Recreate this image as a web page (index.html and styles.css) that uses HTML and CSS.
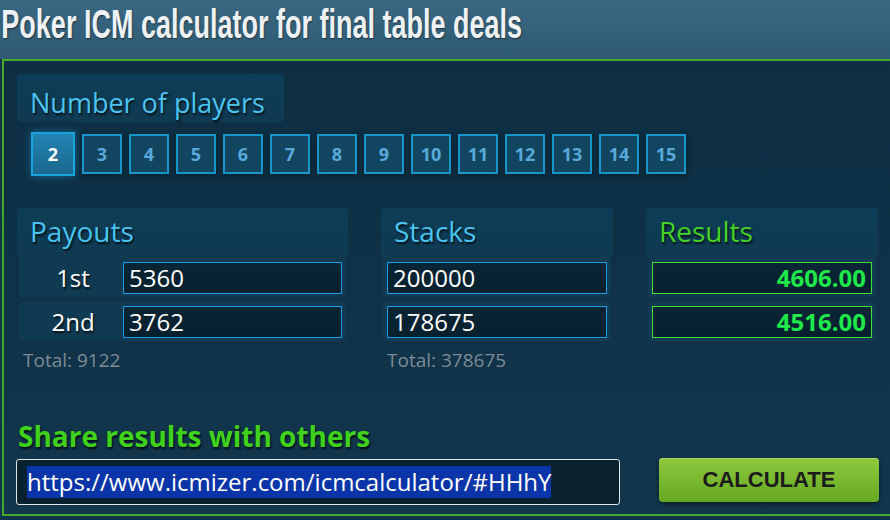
FILE: index.html
```html
<!DOCTYPE html>
<html lang="en">
  <head>
    <meta charset="UTF-8" />
    <meta name="viewport" content="width=device-width, initial-scale=1.0" />
    <link rel="stylesheet" href="styles.css">
    <title>ICM calculator</title>
  </head>
  <body>
    <header class="top">
      <h1>Poker ICM calculator for final table deals</h1>
    </header>

    <main class="panel">
      <section class="players">
        <div class="box-title"><h2>Number of players</h2></div>
        <div class="player-buttons">
          <button class="num active">2</button>
          <button class="num">3</button>
          <button class="num">4</button>
          <button class="num">5</button>
          <button class="num">6</button>
          <button class="num">7</button>
          <button class="num">8</button>
          <button class="num">9</button>
          <button class="num">10</button>
          <button class="num">11</button>
          <button class="num">12</button>
          <button class="num">13</button>
          <button class="num">14</button>
          <button class="num">15</button>
        </div>
      </section>

      <section class="columns">
        <div class="col payouts">
          <div class="box-title"><h2>Payouts</h2></div>
          <div class="row"><span class="place">1st</span><input type="text" value="5360" /></div>
          <div class="row"><span class="place">2nd</span><input type="text" value="3762" /></div>
          <p class="total">Total: 9122</p>
        </div>
        <div class="col stacks">
          <div class="box-title"><h2>Stacks</h2></div>
          <div class="row"><input type="text" value="200000" /></div>
          <div class="row"><input type="text" value="178675" /></div>
          <p class="total">Total: 378675</p>
        </div>
        <div class="col results">
          <div class="box-title"><h2>Results</h2></div>
          <div class="row"><div class="result">4606.00</div></div>
          <div class="row"><div class="result">4516.00</div></div>
        </div>
      </section>

      <section class="share">
        <h3>Share results with others</h3>
        <div class="share-row">
          <div class="share-link"><span class="selected">https://www.icmizer.com/icmcalculator/#HHhY</span></div>
          <button class="calc">CALCULATE</button>
        </div>
      </section>
    </main>
  </body>
</html>
```

FILE: styles.css
```css
body {
  margin: 0;
  background: #12344a;
  font-family: "Open Sans", "Noto Sans", sans-serif;
  overflow: hidden;
}

.top {
  height: 59px;
  background: linear-gradient(#3a6883, #2f5a72);
}
.top h1 {
  margin: 0;
  padding: 1px 0 0 2px;
  font-family: "Liberation Sans", sans-serif;
  font-weight: bold;
  font-size: 40px;
  line-height: 46px;
  color: #eef2f5;
  text-shadow: 1px 1px 2px rgba(0, 0, 0, 0.5);
  transform: scaleX(0.675);
  transform-origin: left center;
  white-space: nowrap;
}

.panel {
  margin-left: 2px;
  height: 457px;
  border: 2px solid #48a82c;
  border-right: none;
  padding: 13px 0 0 13px;
  background: linear-gradient(#0d2e43, #12364c);
  box-sizing: border-box;
}

.box-title {
  background: linear-gradient(#0d3d56, #0f3a52);
  border-radius: 4px;
}
.box-title h2 {
  margin: 0;
  font-weight: normal;
  font-size: 28px;
  line-height: 48px;
  color: #4bc4f0;
  text-shadow: 1px 2px 2px #021018;
  white-space: nowrap;
}

.players .box-title {
  display: inline-block;
  width: 267px;
  height: 48px;
  padding: 4px 0 0 13px;
  box-sizing: border-box;
}
.players .box-title h2 {
  font-size: 27px;
  line-height: 50px;
}

.player-buttons {
  display: flex;
  align-items: center;
  gap: 7px;
  margin: 10px 0 0 14px;
}
.num {
  width: 40px;
  height: 40px;
  padding: 0;
  border: 2px solid #1796c9;
  background: #114560;
  color: #58a9da;
  font-family: "Open Sans", sans-serif;
  font-weight: bold;
  font-size: 18px;
  box-shadow: 0 2px 6px rgba(0, 0, 0, 0.4);
}
.num.active {
  width: 44px;
  height: 44px;
  background: linear-gradient(#2283b2, #1a6890);
  border-color: #1aa4dc;
  color: #fff;
  box-shadow: 0 0 8px rgba(30, 160, 220, 0.5);
}

.columns {
  display: flex;
  gap: 33px;
  margin-top: 32px;
}
.col {
  width: 232px;
}
.col.payouts {
  width: 331px;
}
.col .box-title {
  height: 50px;
  padding-left: 13px;
}
.col .box-title h2 {
  line-height: 46px;
}
.results .box-title h2 {
  color: #47d126;
}

.row {
  display: flex;
  align-items: center;
  height: 39px;
  margin: 0 2px 5px;
  padding: 0 4px;
  background: #0f3a52;
  border-radius: 3px;
}
.place {
  width: 100px;
  text-align: center;
  color: #fff;
  font-size: 24px;
  text-shadow: 1px 2px 2px #021018;
}
.row input,
.result {
  flex: 1;
  min-width: 0;
  height: 32px;
  box-sizing: border-box;
  border: 1px solid #1a9de6;
  padding: 0 5px;
  background: linear-gradient(#0a2535, #06202e);
  color: #fff;
  font-family: "Open Sans", sans-serif;
  font-size: 24px;
}
.result {
  border-color: #3ee03a;
  color: #1ee84a;
  font-weight: bold;
  text-align: right;
  line-height: 30px;
}

.total {
  margin: 0 0 0 6px;
  font-size: 19px;
  line-height: 28px;
  color: #7c8b95;
}

.share {
  margin-top: 44px;
}
.share h3 {
  margin: 0 0 0 1px;
  font-size: 28px;
  line-height: 36px;
  color: #3fd11c;
  text-shadow: 1px 2px 2px #021018;
}
.share-row {
  display: flex;
  align-items: flex-start;
  margin-top: 5px;
}
.share-link {
  width: 604px;
  height: 46px;
  box-sizing: border-box;
  margin-left: -1px;
  border: 1px solid #dfe4e6;
  border-radius: 3px;
  background: #0a2230;
  padding: 6px 0 0 10px;
}
.selected {
  display: inline-block;
  background: #0a35a8;
  color: #fff;
  font-size: 24px;
  line-height: 32px;
}
.calc {
  margin: -1px 0 0 39px;
  width: 220px;
  height: 44px;
  border: none;
  border-radius: 4px;
  background: linear-gradient(#8cc93e, #67a823);
  color: #1c1c1c;
  font-family: "Liberation Sans", sans-serif;
  font-weight: bold;
  font-size: 22px;
  box-shadow: 0 2px 5px rgba(0, 0, 0, 0.5), inset 0 1px 0 #a6d868;
}
```
